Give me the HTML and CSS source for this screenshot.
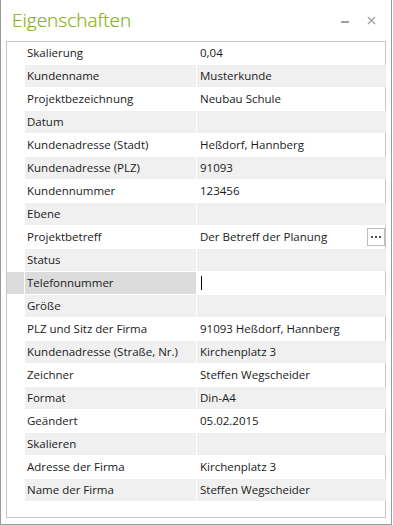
FILE: index.html
```html
<!DOCTYPE html>
<html lang="de">
<head>
    <meta charset="UTF-8">
    <meta name="viewport" content="width=device-width, initial-scale=1.0">
    <title>Eigenschaften</title>
    <link rel="stylesheet" href="styles.css">
</head>
<body>

    <div class="fenster">
        <!-- Titelleiste -->
        <div class="titel">
            <h1>Eigenschaften</h1>
            <div class="knoepfe">
                <svg width="9" height="9" viewBox="0 0 9 9"><rect x="0" y="5" width="8" height="2" fill="#a0a0a0"/></svg>
                <svg width="11" height="9" viewBox="0 0 11 9"><path d="M1 1 L8 8 M8 1 L1 8" stroke="#a0a0a0" stroke-width="1.4" fill="none"/></svg>
            </div>
        </div>

        <!-- Eigenschaftsliste -->
        <div class="panel">
            <div class="zeile"><span class="rand"></span><span class="name">Skalierung</span><span class="wert">0,04</span></div>
            <div class="zeile grau"><span class="rand"></span><span class="name">Kundenname</span><span class="wert">Musterkunde</span></div>
            <div class="zeile"><span class="rand"></span><span class="name">Projektbezeichnung</span><span class="wert">Neubau Schule</span></div>
            <div class="zeile grau"><span class="rand"></span><span class="name">Datum</span><span class="wert"></span></div>
            <div class="zeile"><span class="rand"></span><span class="name">Kundenadresse (Stadt)</span><span class="wert">Heßdorf, Hannberg</span></div>
            <div class="zeile grau"><span class="rand"></span><span class="name">Kundenadresse (PLZ)</span><span class="wert">91093</span></div>
            <div class="zeile"><span class="rand"></span><span class="name">Kundennummer</span><span class="wert">123456</span></div>
            <div class="zeile grau"><span class="rand"></span><span class="name">Ebene</span><span class="wert"></span></div>
            <div class="zeile"><span class="rand"></span><span class="name">Projektbetreff</span><span class="wert">Der Betreff der Planung<span class="mehr"><svg width="16" height="16" viewBox="0 0 16 16"><rect x="3" y="7" width="2" height="2" fill="#505050"/><rect x="7" y="7" width="2" height="2" fill="#505050"/><rect x="11" y="7" width="2" height="2" fill="#505050"/></svg></span></span></div>
            <div class="zeile grau"><span class="rand"></span><span class="name">Status</span><span class="wert"></span></div>
            <div class="zeile aktiv"><span class="rand"></span><span class="name">Telefonnummer</span><span class="wert"><span class="cursor"></span></span></div>
            <div class="zeile grau"><span class="rand"></span><span class="name">Größe</span><span class="wert"></span></div>
            <div class="zeile"><span class="rand"></span><span class="name">PLZ und Sitz der Firma</span><span class="wert">91093 Heßdorf, Hannberg</span></div>
            <div class="zeile grau"><span class="rand"></span><span class="name">Kundenadresse (Straße, Nr.)</span><span class="wert">Kirchenplatz 3</span></div>
            <div class="zeile"><span class="rand"></span><span class="name">Zeichner</span><span class="wert">Steffen Wegscheider</span></div>
            <div class="zeile grau"><span class="rand"></span><span class="name">Format</span><span class="wert">Din-A4</span></div>
            <div class="zeile"><span class="rand"></span><span class="name">Geändert</span><span class="wert">05.02.2015</span></div>
            <div class="zeile grau"><span class="rand"></span><span class="name">Skalieren</span><span class="wert"></span></div>
            <div class="zeile"><span class="rand"></span><span class="name">Adresse der Firma</span><span class="wert">Kirchenplatz 3</span></div>
            <div class="zeile grau"><span class="rand"></span><span class="name">Name der Firma</span><span class="wert">Steffen Wegscheider</span></div>
        </div>
    </div>

</body>
</html>
```

FILE: styles.css
```css
body {
    margin: 0;
    background: #fff;
    font-family: "Open Sans", "Noto Sans", sans-serif;
    font-size: 11.5px;
    color: #1a1a1a;
}

.fenster {
    width: 392px;
    height: 525px;
    box-sizing: border-box;
    border: 1px solid #9a9a9a;
    border-top: none;
    padding: 0 5px 6px 5px;
    display: flex;
    flex-direction: column;
}

.titel {
    height: 41px;
    display: flex;
    align-items: flex-start;
    justify-content: space-between;
}

.titel h1 {
    margin: 8px 0 0 6px;
    font-size: 19px;
    font-weight: 300;
    color: #86b00f;
    line-height: 24px;
    -webkit-text-stroke: 0.2px #86b00f;
}

.knoepfe {
    display: flex;
    gap: 17px;
    margin: 16px 8px 0 0;
}

.panel {
    flex: 1;
    border: 1px solid #c6c6c6;
    display: flex;
    flex-direction: column;
    gap: 1px;
}

.zeile {
    display: grid;
    grid-template-columns: 17px 171px 189px;
    column-gap: 1px;
    height: 22px;
    line-height: 22px;
}

.zeile.grau .name,
.zeile.grau .wert {
    background: #f0f0f0;
}

.zeile.aktiv .rand,
.zeile.aktiv .name {
    background: #dcdcdc;
}

.name {
    padding-left: 2px;
    white-space: nowrap;
}

.wert {
    padding-left: 3px;
    display: flex;
    align-items: center;
    justify-content: space-between;
    white-space: nowrap;
}

.mehr {
    flex-shrink: 0;
    width: 16px;
    height: 16px;
    border: 1px solid #bdbdbd;
    background: #fff;
    margin-right: 1px;
    display: flex;
}

.cursor {
    width: 1px;
    height: 14px;
    background: #000;
    margin-left: 1px;
}
```
